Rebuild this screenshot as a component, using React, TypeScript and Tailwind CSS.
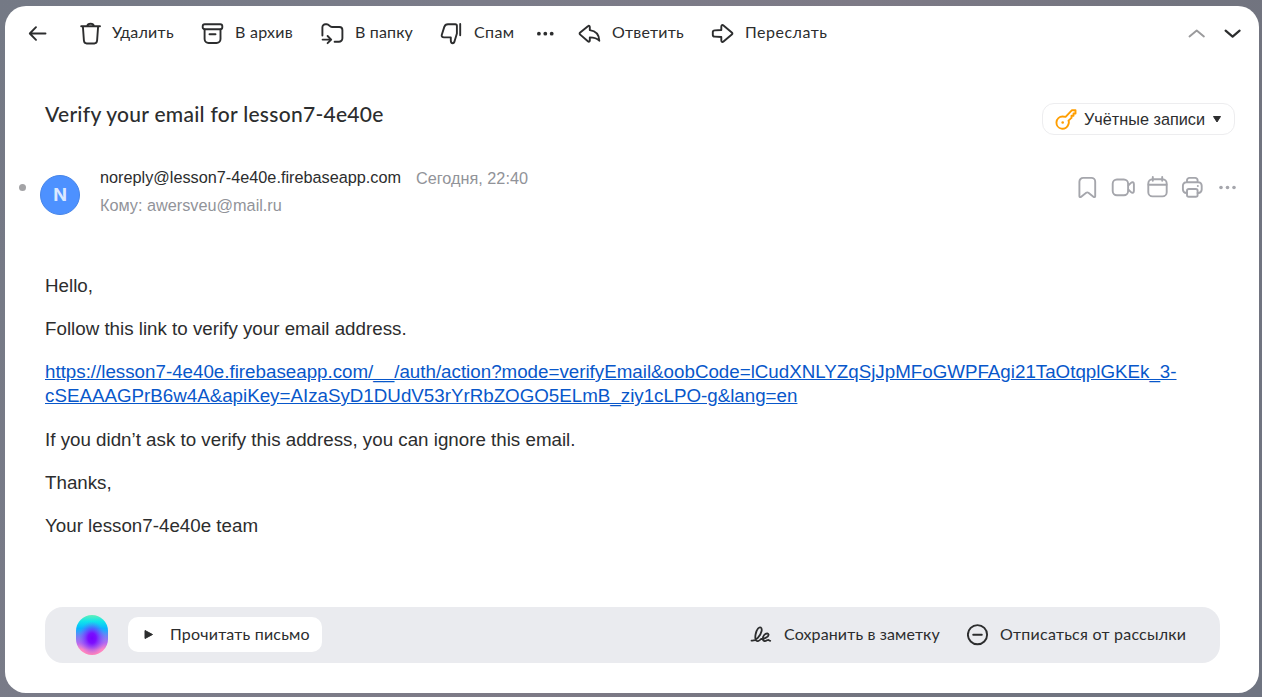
import type { ReactNode } from "react";

function Icon({ children, className = "", w = 24, h = 24 }: { children: ReactNode; className?: string; w?: number; h?: number }) {
  return (
    <svg width={w} height={h} viewBox={`0 0 ${w} ${h}`} fill="none" stroke="currentColor" strokeWidth="1.9" strokeLinecap="round" strokeLinejoin="round" className={`shrink-0 ${className}`}>
      {children}
    </svg>
  );
}

function Action({ icon, label, width, spacing }: { icon: ReactNode; label: string; width: string; spacing: string }) {
  return (
    <button className={`flex shrink-0 items-center gap-[10px] whitespace-nowrap ${width}`}>
      {icon}
      <span className={`relative -top-px text-[16px] leading-6 ${spacing}`}>{label}</span>
    </button>
  );
}

function Toolbar() {
  return (
    <header className="flex h-[54px] shrink-0 items-center pr-[14px] pl-[20px] font-[Lato,sans-serif]">
      <button className="w-[53px]">
        <Icon><path d="M5 12.5H20.5M11 6.2 4.8 12.5 11 18.8" /></Icon>
      </button>
      <Action
        width="w-[123px]"
        spacing="tracking-[0.25px]"
        label="Удалить"
        icon={<Icon><path d="M3.2 5.3H22M9.2 5C9.5 3.600 10.700 2.800 12.600 2.800S15.600 3.600 15.900 5M4.900 5.500l1 14c.2 2 1 3 2.800 3h7.600c1.800 0 2.600-1 2.800-3l1-14" /></Icon>}
      />
      <Action
        width="w-[120px]"
        spacing="tracking-[0.25px]"
        label="В архив"
        icon={<Icon><rect x="1.7" y="3.2" width="19.6" height="5" rx="2" /><path d="M3.6 8.5v9.5a4 4 0 0 0 4 4h7.9a4 4 0 0 0 4-4V8.5M8.5 13.3h6" /></Icon>}
      />
      <Action
        width="w-[119px]"
        spacing="tracking-[0.15px]"
        label="В папку"
        icon={<Icon><path d="M1.4 14.500V6.200a3 3 0 0 1 3-3h1.400c2.500 0 2.600 2.800 5.200 2.800h7.400a3 3 0 0 1 3 3v8.300a3.500 3.500 0 0 1-3.500 3.500H13.600M1.600 18.600h8.500M6.600 15l3.600 3.600L6.600 22.200" /></Icon>}
      />
      <Action
        width="w-[93px]"
        spacing="tracking-[0.4px]"
        label="Спам"
        icon={<Icon><path d="M8 3.2h7.3c1 0 1.6.6 1.6 1.6v7.7l-2.2 7.2c-.4 1.7-1 2.5-2 2.5-1.5 0-1.9-1-1.9-2.7v-3.1H4c-1.9 0-2.7-1-2.2-2.7l2.5-7.8C4.8 4.1 6 3.2 8 3.2ZM20.2 3v11.3" /></Icon>}
      />
      <button className="w-[45px]">
        <Icon><g fill="currentColor" stroke="none"><circle cx="5.9" cy="12.7" r="1.9" /><circle cx="12.3" cy="12.7" r="1.9" /><circle cx="18.7" cy="12.7" r="1.9" /></g></Icon>
      </button>
      <Action
        width="w-[133px]"
        spacing="tracking-[0.2px]"
        label="Ответить"
        icon={<Icon><path d="m2.200 11.500 7.700-6.300c.9-.8 1.900-.4 1.900.8v3.100c5.500.7 9.300 4.200 9.500 10.600-2.400-2.600-5.500-3.300-9.500-3.300v3.100c0 1.200-1 1.600-1.900.8L2.200 13.600c-.8-.7-.8-1.400 0-2.100Z" /></Icon>}
      />
      <Action
        width="w-[130px]"
        spacing="tracking-[0.5px]"
        label="Переслать"
        icon={<Icon><path d="M10.300 9V5.700c0-1.600 1.100-2.100 2.200-1.200l8.300 7c.8.7.8 1.300 0 2l-8.300 7c-1.100.9-2.200.4-2.200-1.200V16l-6.500-.4c-1.300-.1-2-.6-2-1.700v-2.800c0-1.100.7-1.600 2-1.700Z" /></Icon>}
      />
      <div className="ml-auto flex items-center gap-3">
        <Icon className="text-[#9a9a9c]"><path d="m4.5 15.5 7.2-6 7.2 6" /></Icon>
        <Icon><path d="m4.600 9.700 7 6 7-6" strokeWidth="2.2" /></Icon>
      </div>
    </header>
  );
}

function CategoryButton() {
  return (
    <button className="flex h-8 w-[193px] items-center rounded-[12px] border border-[#ededef] pl-[12px]">
      <Icon className="text-[#ff9e00]" w={22} h={22}>
        <path d="M10.600 8.900 17 2.200h3.500v3.300h-2v2.200h-2v2.200l-3 2.700c.5 1.100.4 2.600-.1 3.800A6.100 6.100 0 1 1 7.500 8.500c1.100 0 2.100.1 3.100.4Z" />
        <circle cx="7.700" cy="14.500" r="1.300" fill="currentColor" stroke="none" />
      </Icon>
      <span className="ml-[7px] text-[16.25px] whitespace-nowrap">Учётные записи</span>
      <svg width="8" height="7" viewBox="0 0 8 7" className="ml-[8px]"><path d="M.5.5h7L4 6Z" fill="currentColor" stroke="currentColor" strokeLinejoin="round" /></svg>
    </button>
  );
}

function Orb() {
  return (
    <svg width="32" height="40" viewBox="0 0 32 40" className="shrink-0">
      <defs>
        <linearGradient id="orbBase" x1="0" y1="0" x2="0" y2="1">
          <stop offset="0" stopColor="#62efb9" />
          <stop offset="0.16" stopColor="#10e5ea" />
          <stop offset="0.34" stopColor="#08b5ff" />
          <stop offset="0.52" stopColor="#6e83f5" />
          <stop offset="0.7" stopColor="#b46af0" />
          <stop offset="0.86" stopColor="#ff86c4" />
          <stop offset="1" stopColor="#ff80b8" />
        </linearGradient>
        <radialGradient id="orbCore" cx="0.5" cy="0.58" r="0.42">
          <stop offset="0" stopColor="#7500ff" />
          <stop offset="0.3" stopColor="#7a08ff" stopOpacity="0.95" />
          <stop offset="0.65" stopColor="#7a35ff" stopOpacity="0.5" />
          <stop offset="1" stopColor="#8060ff" stopOpacity="0" />
        </radialGradient>
      </defs>
      <rect width="32" height="40" rx="16" fill="url(#orbBase)" />
      <rect width="32" height="40" rx="16" fill="url(#orbCore)" />
    </svg>
  );
}

function ActionBar() {
  return (
    <footer className="mt-[69px] flex h-[56px] w-[1175px] items-center rounded-[18px] bg-[#eaebef] pr-[33px] pl-[31px] font-[Lato,sans-serif] text-[16px] whitespace-nowrap">
      <Orb />
      <button className="mb-px ml-5 flex h-[35px] w-[194px] items-center rounded-[10px] bg-white pl-[16px]">
        <svg width="10" height="11" viewBox="0 0 10 11"><path d="M1 1.5v8l7.5-4Z" fill="currentColor" stroke="currentColor" strokeLinejoin="round" /></svg>
        <span className="relative -top-px ml-[16px] tracking-[0.2px]">Прочитать письмо</span>
      </button>
      <button className="ml-auto flex w-[217px] items-center">
        <Icon w={22} h={22}><path strokeWidth="1.8" d="M1.500 16.600c4.200.9 9.200-5 10.100-9.600.7-3.700-1.700-4.700-3.600-2.500-2.300 2.800-3.300 8.700-2.300 11.300.9 2.200 3.400 1.500 5.300-.8 2.300 0 7.400-1.600 7.600-4.100.1-1.900-2.700-1.900-4.400.1-1.900 2.200-2 5.500.3 6 1.700.3 2.800-1.200 3.800-1.200.8 0 .9 1.100 2 1" /></Icon>
        <span className="relative -top-[1.5px] ml-[12px] tracking-[0.12px]">Сохранить в заметку</span>
      </button>
      <button className="flex w-[220px] items-center">
        <Icon w={22} h={22}><circle cx="10.5" cy="10.700" r="9.600" /><path d="M6.200 10.700h8.600" /></Icon>
        <span className="relative -top-[1.5px] ml-[11px] tracking-[0.23px]">Отписаться от рассылки</span>
      </button>
    </footer>
  );
}

export default function App() {
  return (
    <div className="h-[697px] w-[1262px] overflow-hidden bg-[linear-gradient(115deg,#747985_0%,#7b7c89_30%,#7d7a86_55%,#72747f_75%,#6f7481_100%)] pt-[6px] pl-[5px] font-['Liberation_Sans',Arial,sans-serif] text-[#2c2d2e]">
      <main className="flex h-[687px] w-[1254px] flex-col rounded-[21px] bg-white">
        <Toolbar />
        <section className="flex h-[75px] items-start justify-between pr-[24px] pl-[40px]">
          <h1 className="mt-[40px] font-[Lato,sans-serif] text-[21px] leading-[28px] font-medium tracking-[0.28px] whitespace-nowrap">Verify your email for lesson7-4e40e</h1>
          <div className="mt-[43px]"><CategoryButton /></div>
        </section>
        <section className="mt-[33px] flex h-[60px] items-start pl-[14px]">
          <span className="mt-[16px] h-[7px] w-[7px] rounded-full bg-[#a3a3a6]" />
          <span className="mt-[7px] ml-[14px] flex h-10 w-10 items-center justify-center rounded-full border border-[#4785e8] bg-[#4d91ff] pb-[2px] font-[Inter,sans-serif] text-[18px] font-bold text-[#dbe9ff]">N</span>
          <div className="-mt-px ml-[20px] text-[16.25px] leading-[20px] whitespace-nowrap">
            <div className="flex">
              <span className="w-[316px]">noreply@lesson7-4e40e.firebaseapp.com</span>
              <span className="relative top-px text-[#919399]">Сегодня, 22:40</span>
            </div>
            <div className="mt-[8px] text-[#919399]">Кому: awersveu@mail.ru</div>
          </div>
          <div className="mt-[7px] mr-[19px] ml-auto flex items-center gap-[11px] text-[#a5a6ac]">
            <Icon><path d="M3.400 21.200V6.700a3.800 3.800 0 0 1 3.800-3.800h8.200a3.800 3.800 0 0 1 3.800 3.800v14.500c0 .9-.8 1.200-1.500.7l-5.300-4.100c-.8-.6-1.400-.6-2.200 0L4.900 21.900c-.7.5-1.500.2-1.500-.7Z" /></Icon>
            <Icon><rect x="1.700" y="4.500" width="15.400" height="15.800" rx="4.200" /><path d="M17.500 10.200 20 7.900c1.300-1.200 2.900-.8 2.900 1v7.200c0 1.800-1.600 2.200-2.900 1l-2.500-2.300" /></Icon>
            <Icon><rect x="2.300" y="4.200" width="18.400" height="17.200" rx="4.200" /><path d="M2.500 9.800h18M6.800 2v3.800M16.200 2v3.800" /></Icon>
            <Icon><path d="M6 7.300V5.300a2.400 2.400 0 0 1 2.400-2.400h5.800a2.400 2.400 0 0 1 2.400 2.400V7.300M6 18h-.7A3.400 3.400 0 0 1 1.900 14.600v-3.900A3.400 3.400 0 0 1 5.300 7.300h12a3.400 3.400 0 0 1 3.400 3.400v3.900a3.400 3.400 0 0 1-3.400 3.400h-.7" /><rect x="6" y="14" width="10.600" height="7.800" rx="1.800" /><circle cx="16.800" cy="10.900" r="1" fill="currentColor" stroke="none" /></Icon>
            <Icon><g fill="currentColor" stroke="none"><circle cx="5" cy="12.500" r="1.800" /><circle cx="11.500" cy="12.500" r="1.800" /><circle cx="18" cy="12.500" r="1.800" /></g></Icon>
          </div>
        </section>
        <article className="mt-[46px] flex flex-col gap-[18.7px] pl-[40px] text-[18.75px] leading-[24.375px]">
          <p>Hello,</p>
          <p>Follow this link to verify your email address.</p>
          <p className="pb-[0.9px] leading-[24px] whitespace-nowrap text-[#0857ca] underline">
            https://lesson7-4e40e.firebaseapp.com/__/auth/action?mode=verifyEmail&amp;oobCode=lCudXNLYZqSjJpMFoGWPFAgi21TaOtqplGKEk_3-<br />
            cSEAAAGPrB6w4A&amp;apiKey=AIzaSyD1DUdV53rYrRbZOGO5ELmB_ziy1cLPO-g&amp;lang=en
          </p>
          <p>If you didn’t ask to verify this address, you can ignore this email.</p>
          <p>Thanks,</p>
          <p>Your lesson7-4e40e team</p>
        </article>
        <div className="pl-[40px]"><ActionBar /></div>
      </main>
    </div>
  );
}
